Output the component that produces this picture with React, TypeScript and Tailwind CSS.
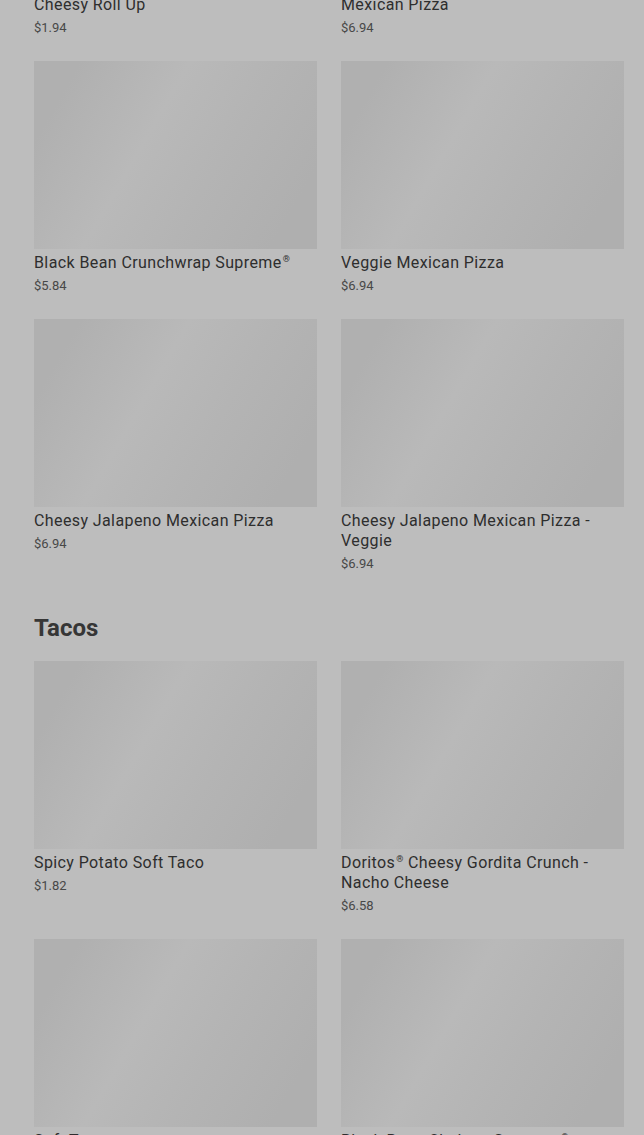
type Item = { name: string; price: string };

const sections: { title?: string; items: Item[] }[] = [
  {
    items: [
      { name: "Cheesy Roll Up", price: "$1.94" },
      { name: "Mexican Pizza", price: "$6.94" },
      { name: "Black Bean Crunchwrap Supreme®", price: "$5.84" },
      { name: "Veggie Mexican Pizza", price: "$6.94" },
      { name: "Cheesy Jalapeno Mexican Pizza", price: "$6.94" },
      { name: "Cheesy Jalapeno Mexican Pizza - Veggie", price: "$6.94" },
    ],
  },
  {
    title: "Tacos",
    items: [
      { name: "Spicy Potato Soft Taco", price: "$1.82" },
      { name: "Doritos® Cheesy Gordita Crunch - Nacho Cheese", price: "$6.58" },
      { name: "Soft Taco", price: "$1.82" },
      { name: "Black Bean Chalupa Supreme®", price: "$4.59" },
    ],
  },
];

// ® is shown as a small raised mark
function Name({ text }: { text: string }) {
  const parts = text.split("®");
  return (
    <>
      {parts.map((p, i) => (
        <span key={i}>
          {p}
          {i < parts.length - 1 && (
            <span className="inline-block align-top text-[9px] leading-[12px] font-normal ml-[1px]">
              ®
            </span>
          )}
        </span>
      ))}
    </>
  );
}

function Card({ item }: { item: Item }) {
  return (
    <div className="flex flex-col">
      <div className="h-[188px] w-full bg-[linear-gradient(120deg,#b0b0b0_12%,#b9b9b9_40%,#b4b4b4_62%,#afafaf_88%)]" />
      <p className="mt-[4px] text-[16px] leading-[20px] font-normal tracking-[0.4px] text-[#2e2e2e]">
        <Name text={item.name} />
      </p>
      <p className="mt-[4px] text-[13px] leading-[18px] text-[#484848]">
        {item.price}
      </p>
    </div>
  );
}

export default function App() {
  return (
    <div
      className="min-h-[1135px] bg-[#bdbdbd] overflow-hidden"
      style={{ fontFamily: "Roboto, 'Liberation Sans', sans-serif" }}
    >
      <div className="mt-[-197px] pl-[34px] w-[624px] flex flex-col gap-[39px]">
        {sections.map((s, i) => (
          <section key={i} className="flex flex-col">
            {s.title && (
              <h2 className="text-[24px] leading-[32px] font-bold text-[#363636] mb-[17px]">
                {s.title}
              </h2>
            )}
            <div className="grid grid-cols-2 gap-x-[24px] gap-y-[24px]">
              {s.items.map((it) => (
                <Card key={it.name} item={it} />
              ))}
            </div>
          </section>
        ))}
      </div>
    </div>
  );
}
